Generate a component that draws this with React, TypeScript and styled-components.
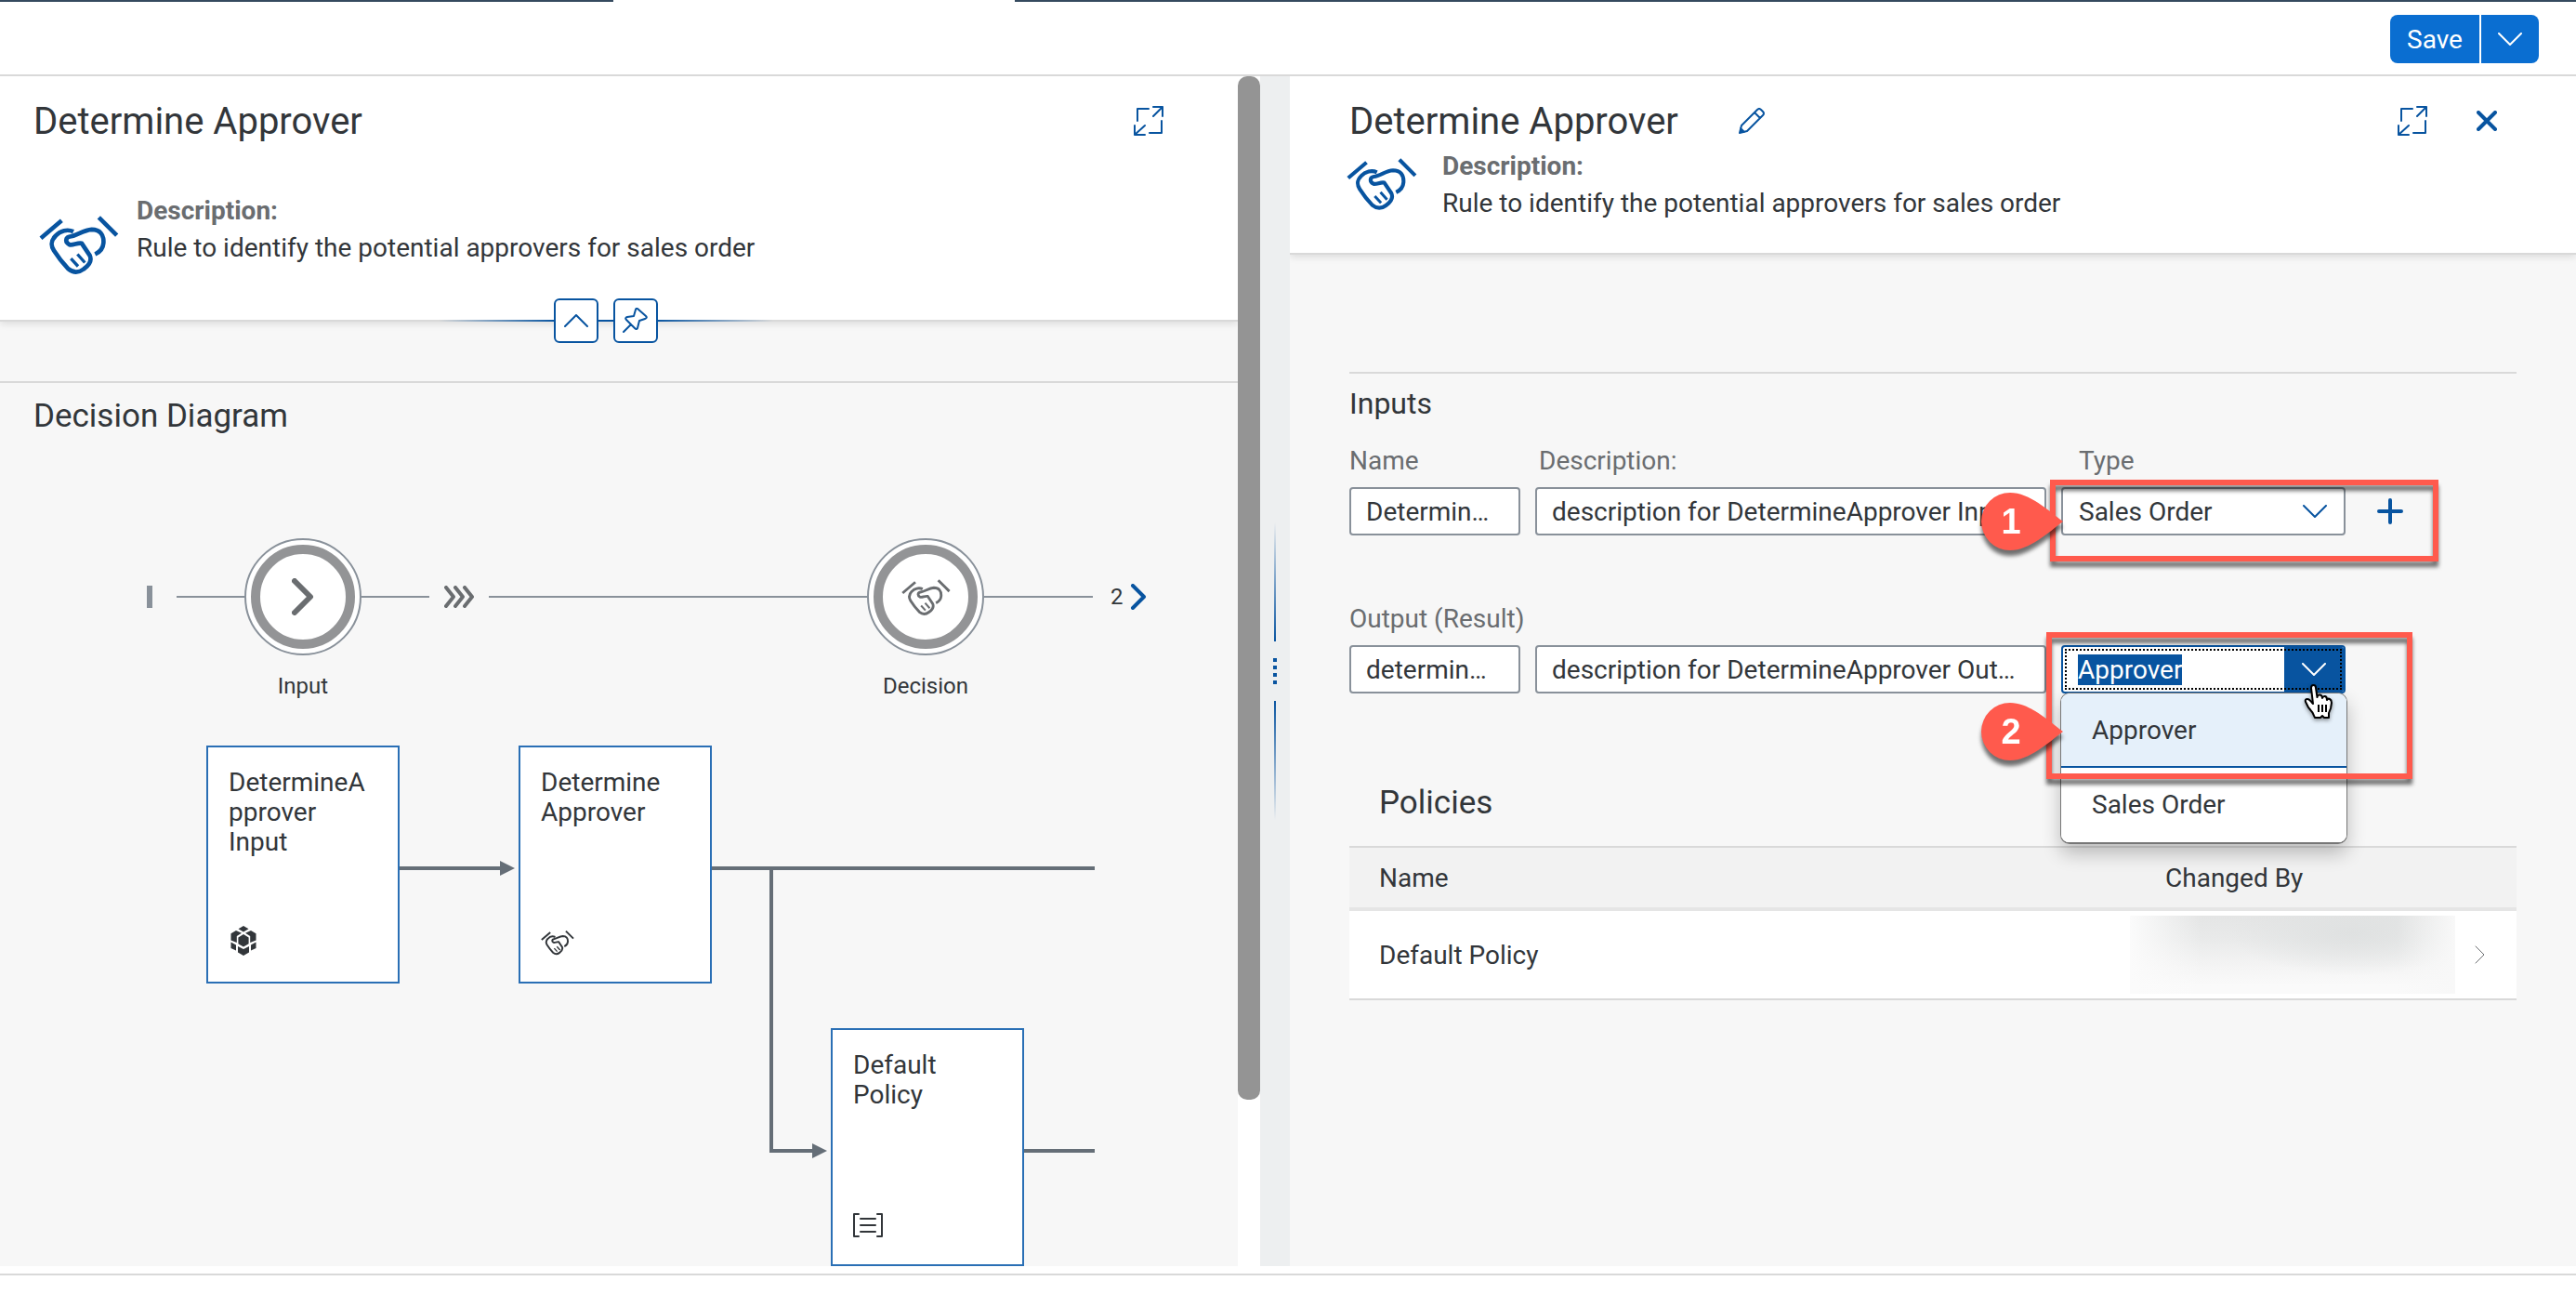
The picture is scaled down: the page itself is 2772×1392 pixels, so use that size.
import React, { useEffect, useRef } from "react";
import styled, { createGlobalStyle } from "styled-components";

const blue = "#0854a0";
const ink = "#32363a";
const muted = "#6a6d70";
const line = "#d9d9d9";

const GlobalStyle = createGlobalStyle`
  *, *::before, *::after { box-sizing: border-box; }
  body {
    margin: 0;
    background: #fff;
    color: ${ink};
    font-family: Roboto, "Liberation Sans", sans-serif;
    font-size: 28px;
  }
  h1, h2, h3, p { margin: 0; font-weight: 400; }
  button, input, select { font: inherit; color: inherit; margin: 0; }
  svg { display: block; flex: none; }
`;

const Page = styled.div`
  min-height: 100vh;
  display: grid;
  grid-template-rows: 82px minmax(1280px, 1fr) 8px 22px;
`;

const TopBar = styled.header`
  display: flex;
  flex-direction: column;
  border-bottom: 2px solid ${line};
`;

const ShellEdge = styled.div`
  height: 2px;
  display: grid;
  grid-template-columns: 660px 432px 1fr;
`;

const ShellStrip = styled.span<{ $selected?: boolean }>`
  background: ${(p) => (p.$selected ? "#fff" : "#354a5f")};
`;

const Actions = styled.div`
  flex: 1;
  display: flex;
  justify-content: flex-end;
  align-items: flex-start;
  gap: 2px;
  padding: 14px 40px 0 0;
`;

const PrimaryButton = styled.button<{ $side: "left" | "right" }>`
  height: 52px;
  width: ${(p) => (p.$side === "left" ? "96px" : "62px")};
  display: flex;
  align-items: center;
  justify-content: center;
  padding: 0;
  border: 0;
  border-radius: ${(p) => (p.$side === "left" ? "8px 0 0 8px" : "0 8px 8px 0")};
  background: #0a6ed1;
  color: #fff;
`;

const Workspace = styled.main`
  display: grid;
  grid-template-columns: minmax(0, 1356fr) 32px minmax(0, 1384fr);
`;

const Footer = styled.footer`
  border-top: 2px solid ${line};
`;

const ScrollPane = styled.section`
  display: grid;
  grid-template-columns: minmax(0, 1fr) 24px;
`;

const Pane = styled.section`
  background: #f7f7f7;
`;

const ScrollTrack = styled.div`
  background: #fff;
`;

const ScrollThumb = styled.div`
  height: 86%;
  border-radius: 10px;
  background: #949494;
`;

const Splitter = styled.div`
  display: flex;
  flex-direction: column;
  align-items: center;
  justify-content: center;
  gap: 18px;
  background: #edeff0;
`;

const SplitterLine = styled.span<{ $to: "top" | "bottom" }>`
  width: 2px;
  height: 128px;
  background: linear-gradient(to ${(p) => p.$to}, ${blue}, transparent);
`;

const Grip = styled.span`
  display: grid;
  gap: 4px;
`;

const GripDot = styled.span`
  width: 4px;
  height: 4px;
  background: ${blue};
`;

const PaneHeader = styled.header<{ $inset: number; $bottom: number }>`
  position: relative;
  padding: 24px 70px ${(p) => p.$bottom}px ${(p) => p.$inset}px;
  background: #fff;
  border-bottom: 2px solid ${line};
  box-shadow: 0 2px 8px rgba(0, 0, 0, 0.12);
  clip-path: inset(0 0 -30px 0);
`;

const TitleRow = styled.div`
  display: flex;
  align-items: center;
  height: 48px;
`;

const Title = styled.h1`
  padding-top: 2px;
  font-size: 40px;
  line-height: 48px;
  white-space: nowrap;
`;

const IconButton = styled.button<{ $push?: boolean; $gap?: number }>`
  width: 52px;
  height: 48px;
  display: flex;
  align-items: center;
  justify-content: center;
  padding: 0;
  border: 0;
  background: none;
  color: ${blue};
  margin-left: ${(p) => (p.$push ? "auto" : `${p.$gap ?? 0}px`)};
`;

const Summary = styled.div<{ $top: number; $gap: number; $iconTop: number; $indent: number }>`
  display: flex;
  align-items: flex-start;
  gap: ${(p) => p.$gap}px;
  margin-top: ${(p) => p.$top}px;
  margin-left: ${(p) => p.$indent}px;
  line-height: 40px;
  > svg {
    margin-top: ${(p) => p.$iconTop}px;
    color: ${blue};
  }
`;

const SummaryLabel = styled.p`
  font-weight: 700;
  color: ${muted};
`;

const HeaderToggles = styled.div`
  position: absolute;
  left: 0;
  right: 28px;
  bottom: -25px;
  z-index: 1;
  display: flex;
  justify-content: center;
  align-items: center;
  gap: 16px;
`;

const ToggleLine = styled.span`
  position: absolute;
  width: 360px;
  height: 2px;
  background: linear-gradient(to right, transparent, ${blue} 35%, ${blue} 65%, transparent);
`;

const Toggle = styled.button`
  position: relative;
  width: 48px;
  height: 48px;
  display: flex;
  align-items: center;
  justify-content: center;
  padding: 0;
  border: 2px solid ${blue};
  border-radius: 6px;
  background: #fff;
  color: ${blue};
`;

const DiagramSection = styled.div`
  margin-top: 64px;
  padding-top: 14px;
  border-top: 2px solid ${line};
`;

const SectionTitle = styled.h2<{ $indent: number }>`
  padding-left: ${(p) => p.$indent}px;
  font-size: 35px;
  line-height: 44px;
`;

const Lane = styled.div`
  width: 1078px;
  display: flex;
  align-items: center;
  margin: 109px 0 0 158px;
  color: ${muted};
`;

const LaneStart = styled.span`
  width: 6px;
  height: 24px;
  margin-right: 26px;
  background: #89919a;
`;

const LaneLine = styled.span<{ $width?: number }>`
  height: 2px;
  background: #89919a;
  ${(p) => (p.$width ? `width: ${p.$width}px;` : "flex: 1;")}
`;

const LaneGap = styled.span`
  margin: 0 16px;
`;

const Stage = styled.div`
  position: relative;
  width: 126px;
  height: 126px;
  padding: 5px;
  border: 2px solid #89919a;
  border-radius: 50%;
  background: #fff;
`;

const StageRing = styled.div`
  height: 100%;
  display: flex;
  align-items: center;
  justify-content: center;
  border: 10px solid #939496;
  border-radius: 50%;
`;

const StageLabel = styled.div`
  position: absolute;
  top: calc(100% + 19px);
  left: 0;
  right: 0;
  text-align: center;
  font-size: 24px;
  line-height: 32px;
  color: ${ink};
`;

const MoreStages = styled.button`
  width: 60px;
  display: flex;
  align-items: center;
  gap: 7px;
  padding: 0 0 0 19px;
  border: 0;
  background: none;
  font-size: 24px;
  color: ${ink};
  svg { color: ${blue}; }
`;

const Canvas = styled.div`
  display: grid;
  grid-template-columns: 208px 128px 208px 128px 208px 76px;
  grid-template-rows: 256px 48px 256px;
  margin: 97px 0 0 222px;
`;

const Node = styled.article<{ $col: number; $row: number }>`
  grid-column: ${(p) => p.$col};
  grid-row: ${(p) => p.$row};
  display: flex;
  flex-direction: column;
  justify-content: space-between;
  padding: 22px 22px 28px;
  border: 2px solid #2a6fb5;
  background: #fff;
`;

const NodeTitle = styled.h3`
  font-size: 28px;
  line-height: 32px;
  overflow-wrap: anywhere;
`;

const Arrow = styled.svg`
  grid-column: 2;
  grid-row: 1;
  color: #656e77;
`;

const Branch = styled.svg`
  grid-column: 4 / 7;
  grid-row: 1 / 4;
  color: #656e77;
`;

const RuleBody = styled.div`
  padding: 126px 64px 0;
`;

const FormSection = styled.form`
  padding-top: 12px;
  border-top: 2px solid ${line};
`;

const FormTitle = styled.h2`
  margin-bottom: 24px;
  font-size: 32px;
  line-height: 40px;
`;

const FieldGrid = styled.div<{ $top?: number }>`
  display: grid;
  grid-template-columns: 184px minmax(0, 1fr) 306px 168px;
  column-gap: 16px;
  row-gap: 10px;
  margin-top: ${(p) => p.$top ?? 0}px;
`;

const Label = styled.label<{ $indent?: number }>`
  padding-left: ${(p) => p.$indent ?? 0}px;
  line-height: 36px;
  color: ${muted};
  white-space: nowrap;
`;

const LabelRow = styled.div`
  grid-column: 1 / -1;
  line-height: 36px;
`;

const TextField = styled.input`
  width: 100%;
  height: 52px;
  padding: 0 22px 0 16px;
  border: 2px solid #89919a;
  border-radius: 4px;
  background: #fff;
  text-overflow: ellipsis;
`;

const TypeCell = styled.div`
  position: relative;
`;

const TypeSelect = styled.select`
  appearance: none;
  width: 100%;
  height: 52px;
  padding: 0 60px 0 17px;
  border: 2px solid #89919a;
  border-radius: 4px;
  background: #fff;
`;

const SelectArrow = styled.span`
  position: absolute;
  top: 0;
  right: 20px;
  height: 52px;
  display: flex;
  align-items: center;
  color: ${blue};
  pointer-events: none;
`;

const AddButton = styled.button`
  width: 64px;
  height: 52px;
  display: flex;
  align-items: center;
  justify-content: center;
  padding: 0;
  border: 0;
  background: none;
  color: ${blue};
`;

const Combo = styled.div`
  position: relative;
  display: flex;
  height: 52px;
  border: 2px solid ${blue};
  border-radius: 4px;
  background: #fff;
  overflow: hidden;
  &::after {
    content: "";
    position: absolute;
    inset: 2px;
    border: 2px dotted #000;
    pointer-events: none;
  }
`;

const ComboInput = styled.input`
  flex: 1;
  min-width: 0;
  padding: 0 0 0 16px;
  border: 0;
  outline: 0;
  background: none;
  &::selection { background: ${blue}; color: #fff; }
`;

const ComboButton = styled.button`
  width: 64px;
  display: flex;
  align-items: center;
  justify-content: center;
  padding: 0;
  border: 0;
  background: ${blue};
  color: #fff;
`;

const Options = styled.ul`
  position: absolute;
  z-index: 2;
  top: 51px;
  left: -1px;
  right: -2px;
  margin: 0;
  padding: 0;
  list-style: none;
  border: 1px solid #777;
  border-bottom-width: 2px;
  border-radius: 10px;
  background: #fff;
  overflow: hidden;
  box-shadow: 0 10px 20px rgba(0, 0, 0, 0.24);
`;

const Option = styled.li<{ $active?: boolean }>`
  height: 80px;
  display: flex;
  align-items: center;
  padding-left: 33px;
  background: ${(p) => (p.$active ? "#e5f0fa" : "#fff")};
  border-bottom: 2px solid ${(p) => (p.$active ? blue : "#fff")};
`;

const Highlight = styled.div<{ $x: number; $y: number; $w: number; $h: number }>`
  position: absolute;
  z-index: 3;
  left: ${(p) => p.$x}px;
  top: ${(p) => p.$y}px;
  width: ${(p) => p.$w}px;
  height: ${(p) => p.$h}px;
  border: 6px solid #ff5a4d;
  filter: drop-shadow(0 6px 2px rgba(0, 0, 0, 0.55));
  pointer-events: none;
`;

const Pin = styled.div<{ $y: number }>`
  position: absolute;
  z-index: 4;
  left: -86px;
  top: ${(p) => p.$y}px;
  filter: drop-shadow(0 6px 2px rgba(0, 0, 0, 0.55));
  pointer-events: none;
`;

const PinNumber = styled.span`
  position: absolute;
  inset: 0 24px 0 0;
  display: flex;
  align-items: center;
  justify-content: center;
  font: 700 38px/40px "Liberation Sans", Arial, sans-serif;
  color: #fff;
`;

const Pointer = styled.svg`
  position: absolute;
  z-index: 5;
  left: 261px;
  top: 42px;
  filter: drop-shadow(0 2px 2px rgba(0, 0, 0, 0.4));
`;

const Policies = styled.section`
  margin-top: 96px;
`;

const Table = styled.table`
  width: 100%;
  margin-top: 24px;
  border-spacing: 0;
  table-layout: fixed;
`;

const HeadCell = styled.th<{ $left?: number; $width?: number }>`
  height: 70px;
  padding: 0 0 0 ${(p) => p.$left ?? 0}px;
  ${(p) => (p.$width ? `width: ${p.$width}px;` : "")}
  border-top: 2px solid ${line};
  border-bottom: 4px solid #e5e5e5;
  background: #f2f2f2;
  font-weight: 400;
  text-align: left;
`;

const Cell = styled.td<{ $left?: number }>`
  height: 96px;
  padding: 0 0 0 ${(p) => p.$left ?? 0}px;
  border-bottom: 2px solid ${line};
  background: #fff;
  color: ${ink};
`;

const RowArrow = styled.span`
  color: ${muted};
`;

const Redacted = styled.div`
  height: 84px;
  background:
    linear-gradient(to right, #fbfbfb 0%, transparent 22%, transparent 82%, #f8f8f8 100%),
    radial-gradient(ellipse 130px 46px at 68% 22%, #dfe1e1, transparent),
    linear-gradient(to bottom, #e4e5e5 0%, #e9eaea 30%, #f4f4f4 65%, #fafafa 90%);
`;

const Stroke = ({ w, h, d, size }: { w: number; h: number; d: string; size: number }) => (
  <svg width={w} height={h} viewBox={`0 0 ${w} ${h}`} fill="none" stroke="currentColor" strokeWidth={size} strokeLinecap="round" strokeLinejoin="round" aria-hidden="true">
    <path d={d} />
  </svg>
);

const ChevronDown = () => <Stroke w={26} h={14} size={2} d="M1 1 L13 13 L25 1" />;

const ExpandIcon = () => (
  <Stroke w={32} h={32} size={2} d="M4 16 V3 H16 M30 16 V29 H17 M21 1 H31 V11 M31 1 L21 11 M1 21 V31 H12 M1 31 L12 21" />
);

const Handshake = ({ width, height }: { width: number; height: number }) => (
  <svg width={width} height={height} viewBox="36 28 258 188" fill="none" stroke="currentColor" strokeWidth="14" strokeLinejoin="round" aria-hidden="true">
    <path d="M42 100 L109 43 M229 33 L287 91" />
    <path d="M147 79 C128 70 104 76 90 92 C72 110 74 124 84 140 C98 162 114 182 130 199 C146 212 164 212 180 200 C200 186 206 170 200 156 L174 117 C160 114 146 124 134 121 C120 114 120 98 136 95 C160 92 178 74 206 72 C232 72 246 88 244 116 C243 130 234 144 217 152" />
    <path strokeWidth="10" d="M139 166 L162 191 M160 152 L184 179" />
  </svg>
);

const CubeIcon = () => (
  <svg width="32" height="32" viewBox="-2 0 32 32" fill={ink} aria-hidden="true">
    <path d="M14 0 L19.5 3.3 L14 6.6 L8.5 3.3Z M6 5 L12 7.8 L6.8 11 V18 L0.5 15.5 V8.2Z M22 5 L16 7.8 L21.2 11 V18 L27.5 15.5 V8.2Z M14 9 L19.6 12.5 V19.2 L14 22.6 L8.4 19.2 V12.5Z M0.5 17.6 L6 20.5 V26.6 L0.5 24Z M27.5 17.6 L22 20.5 V26.6 L27.5 24Z M8 22 L14 25 L20 22 V28.6 L14 32 L8 28.6Z" />
  </svg>
);

const PinShape = ({ n, y }: { n: number; y: number }) => (
  <Pin $y={y}>
    <svg width="88" height="62" viewBox="0 0 88 62" aria-hidden="true">
      <path fill="#ff5a4d" d="M88 31 C72 19 52 0 31 0 A31 31 0 0 0 31 62 C52 62 72 43 88 31Z" />
    </svg>
    <PinNumber>{n}</PinNumber>
  </Pin>
);

export default function App() {
  const outputType = useRef<HTMLInputElement>(null);

  useEffect(() => {
    outputType.current?.focus();
    outputType.current?.select();
  }, []);

  return (
    <>
      <GlobalStyle />
      <Page>
        <TopBar>
          <ShellEdge>
            <ShellStrip />
            <ShellStrip $selected />
            <ShellStrip />
          </ShellEdge>
          <Actions>
            <PrimaryButton type="button" $side="left">Save</PrimaryButton>
            <PrimaryButton type="button" $side="right" aria-label="More save options">
              <ChevronDown />
            </PrimaryButton>
          </Actions>
        </TopBar>

        <Workspace>
          <ScrollPane>
            <Pane>
              <PaneHeader $inset={36} $bottom={49}>
                <TitleRow>
                  <Title>Determine Approver</Title>
                  <IconButton type="button" $push aria-label="Full screen"><ExpandIcon /></IconButton>
                </TitleRow>
                <Summary $top={53} $gap={19} $iconTop={25} $indent={6}>
                  <Handshake width={86} height={63} />
                  <div>
                    <SummaryLabel>Description:</SummaryLabel>
                    <p>Rule to identify the potential approvers for sales order</p>
                  </div>
                </Summary>
                <HeaderToggles>
                  <ToggleLine />
                  <Toggle type="button" aria-label="Collapse header">
                    <Stroke w={26} h={14} size={2} d="M1 13 L13 1 L25 13" />
                  </Toggle>
                  <Toggle type="button" aria-label="Pin header">
                    <Stroke w={28} h={28} size={2} d="M16 1 L25 9 Q27 11 24 12 L18 14 L16 22 Q15 24 13 22 L4 13 Q2 11 5 10 L12 9 L14 2 Q15 0 16 1Z M9 18 L1 26" />
                  </Toggle>
                </HeaderToggles>
              </PaneHeader>

              <DiagramSection>
                <SectionTitle $indent={36}>Decision Diagram</SectionTitle>
                <Lane>
                  <LaneStart />
                  <LaneLine $width={73} />
                  <Stage>
                    <StageRing><Stroke w={24} h={40} size={6} d="M3 3 L20 20 L3 37" /></StageRing>
                    <StageLabel>Input</StageLabel>
                  </Stage>
                  <LaneLine $width={73} />
                  <LaneGap>
                    <Stroke w={32} h={24} size={4} d="M2 2 L10 12 L2 22 M12 2 L20 12 L12 22 M22 2 L30 12 L22 22" />
                  </LaneGap>
                  <LaneLine />
                  <Stage>
                    <StageRing><Handshake width={53} height={39} /></StageRing>
                    <StageLabel>Decision</StageLabel>
                  </Stage>
                  <LaneLine $width={117} />
                  <MoreStages type="button" aria-label="2 more stages">
                    2
                    <Stroke w={18} h={28} size={4} d="M3 2 L15 14 L3 26" />
                  </MoreStages>
                </Lane>

                <Canvas>
                  <Arrow width="128" height="256" viewBox="0 0 128 256" fill="currentColor" aria-hidden="true">
                    <path d="M0 130 H108 V124 L124 132 L108 140 V134 H0Z" />
                  </Arrow>
                  <Branch width="412" height="560" viewBox="0 0 412 560" fill="currentColor" aria-hidden="true">
                    <path d="M0 130 H412 V134 H66 V434 H108 V428 L124 436 L108 444 V438 H62 V134 H0Z M336 434 H412 V438 H336Z" />
                  </Branch>
                  <Node $col={1} $row={1}>
                    <NodeTitle>DetermineApprover Input</NodeTitle>
                    <CubeIcon />
                  </Node>
                  <Node $col={3} $row={1}>
                    <NodeTitle>Determine Approver</NodeTitle>
                    <Handshake width={36} height={28} />
                  </Node>
                  <Node $col={5} $row={3}>
                    <NodeTitle>Default Policy</NodeTitle>
                    <Stroke w={32} h={28} size={2} d="M6 2 H1 V26 H6 M26 2 H31 V26 H26 M8 7 H24 M8 14 H24 M8 21 H24" />
                  </Node>
                </Canvas>
              </DiagramSection>
            </Pane>
            <ScrollTrack><ScrollThumb /></ScrollTrack>
          </ScrollPane>

          <Splitter>
            <SplitterLine $to="top" />
            <Grip><GripDot /><GripDot /><GripDot /><GripDot /></Grip>
            <SplitterLine $to="bottom" />
          </Splitter>

          <Pane>
            <PaneHeader $inset={64} $bottom={33}>
              <TitleRow>
                <Title>Determine Approver</Title>
                <IconButton type="button" $gap={53} aria-label="Edit">
                  <Stroke w={28} h={28} size={2} d="M1 27 L3 19 L20 2 Q22 0 24 2 L26 4 Q28 6 26 8 L9 25 Z M17 5 L23 11 M2 22 L6 26 M2 24 L4 26" />
                </IconButton>
                <IconButton type="button" $push aria-label="Full screen"><ExpandIcon /></IconButton>
                <IconButton type="button" $gap={28} aria-label="Close">
                  <Stroke w={22} h={22} size={4} d="M2 2 L20 20 M20 2 L2 20" />
                </IconButton>
              </TitleRow>
              <Summary $top={5} $gap={27} $iconTop={11} $indent={-3}>
                <Handshake width={76} height={56} />
                <div>
                  <SummaryLabel>Description:</SummaryLabel>
                  <p>Rule to identify the potential approvers for sales order</p>
                </div>
              </Summary>
            </PaneHeader>

            <RuleBody>
              <FormSection>
                <FormTitle>Inputs</FormTitle>
                <FieldGrid>
                  <Label htmlFor="in-name">Name</Label>
                  <Label htmlFor="in-desc" $indent={4}>Description:</Label>
                  <Label htmlFor="in-type" $indent={19}>Type</Label>
                  <span />
                  <TextField id="in-name" defaultValue="DetermineApproverInput" />
                  <TextField id="in-desc" defaultValue="description for DetermineApprover Input" />
                  <TypeCell>
                    <TypeSelect id="in-type" defaultValue="Sales Order">
                      <option>Sales Order</option>
                      <option>Approver</option>
                    </TypeSelect>
                    <SelectArrow><ChevronDown /></SelectArrow>
                    <Highlight $x={-12} $y={-8} $w={418} $h={88} />
                    <PinShape n={1} y={6} />
                  </TypeCell>
                  <AddButton type="button" aria-label="Add input">
                    <Stroke w={28} h={28} size={4} d="M14 2 V26 M2 14 H26" />
                  </AddButton>
                </FieldGrid>

                <FieldGrid $top={72}>
                  <LabelRow>
                    <Label htmlFor="out-name">Output (Result)</Label>
                  </LabelRow>
                  <TextField id="out-name" defaultValue="determineApproverOutput" />
                  <TextField aria-label="Output description" defaultValue="description for DetermineApprover Output" />
                  <TypeCell>
                    <Combo>
                      <ComboInput ref={outputType} aria-label="Output type" defaultValue="Approver" />
                      <ComboButton type="button" aria-label="Show types"><ChevronDown /></ComboButton>
                    </Combo>
                    <Options>
                      <Option $active>Approver</Option>
                      <Option>Sales Order</Option>
                    </Options>
                    <Highlight $x={-16} $y={-14} $w={394} $h={158} />
                    <PinShape n={2} y={62} />
                    <Pointer width="32" height="38" viewBox="0 0 32 38" fill="#fff" stroke="#000" strokeWidth="2" strokeLinejoin="round" aria-hidden="true">
                      <path d="M8 4 Q8 1 10.500 1 Q13 1 13 4 L14.500 14 Q15 11 17.500 11.500 Q20 12 20 15 Q21 12.500 23 13 Q25 13.500 25 17 Q26 15 28 16 Q30 17 30 20 L29 26 L27 31 V36 H22 L20 34 L18 36 H12 Q10 30 5 25 L2 19 Q1 16 4 16 Q6 16 9 20 L10 21Z" />
                      <path d="M16 22 V30 M20 22 V30 M24 22 V30" />
                    </Pointer>
                  </TypeCell>
                </FieldGrid>
              </FormSection>

              <Policies>
                <SectionTitle $indent={32}>Policies</SectionTitle>
                <Table>
                  <thead>
                    <tr>
                      <HeadCell $left={32}>Name</HeadCell>
                      <HeadCell $left={38} $width={350}>Changed By</HeadCell>
                      <HeadCell $width={66} aria-label="Open" />
                    </tr>
                  </thead>
                  <tbody>
                    <tr>
                      <Cell $left={32}>Default Policy</Cell>
                      <Cell><Redacted /></Cell>
                      <Cell $left={21}>
                        <RowArrow>
                          <Stroke w={12} h={20} size={1} d="M1 1 L10 10 L1 19" />
                        </RowArrow>
                      </Cell>
                    </tr>
                  </tbody>
                </Table>
              </Policies>
            </RuleBody>
          </Pane>
        </Workspace>
        <span />
        <Footer />
      </Page>
    </>
  );
}
